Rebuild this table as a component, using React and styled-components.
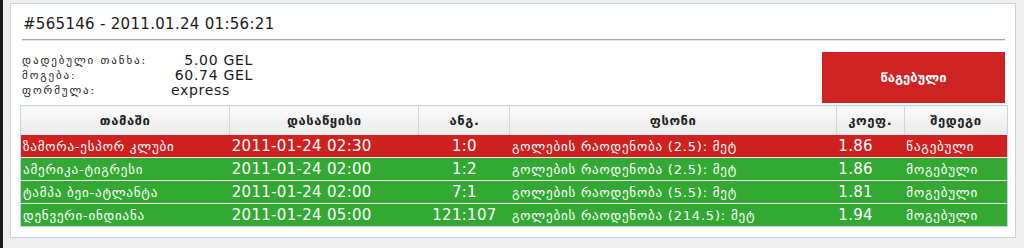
import React from 'react';
import styled, { createGlobalStyle } from 'styled-components';

const GlobalStyle = createGlobalStyle`
  html, body {
    margin: 0;
    padding: 0;
    background: #efefef;
  }
  body {
    font-family: "DejaVu Sans", Verdana, sans-serif;
  }
`;

const Page = styled.div`
  box-sizing: border-box;
  height: 248px;
  border-left: 3px solid #1c1c1c;
  padding: 3px 8px 0 7px;
`;

const Panel = styled.div`
  box-sizing: border-box;
  height: 235px;
  background: #ffffff;
  border: 1px solid #c6d3e7;
  padding: 11px 9px 0 9px;
`;

const Title = styled.div`
  margin: 0 1px 0 3px;
  font-size: 15px;
  line-height: 18px;
  letter-spacing: 0.3px;
  color: #1a1a1a;
`;

const Rule = styled.div`
  margin: 6px 1px 0 2px;
  height: 1px;
  background: #a6a6a6;
  border-bottom: 1px solid #e4e4e4;
`;

const InfoRow = styled.div`
  display: flex;
  justify-content: space-between;
  align-items: flex-start;
  margin: 11px 1px 0 2px;
`;

const InfoGrid = styled.div`
  display: grid;
  grid-template-columns: 140px 91px;
  grid-auto-rows: 15px;
  margin-top: 1px;
`;

const InfoLabel = styled.div`
  font-size: 11px;
  line-height: 15px;
  letter-spacing: 1.9px;
  color: #222;
  white-space: nowrap;
`;

const InfoValue = styled.div`
  font-size: 14px;
  line-height: 15px;
  letter-spacing: 0.7px;
  color: #1a1a1a;
  text-align: right;
  white-space: nowrap;
  padding-right: ${(p) => p.$pad || 0}px;
`;

const StatusBox = styled.div`
  width: 183px;
  height: 51px;
  background: #cf2222;
  color: #fff;
  font-weight: bold;
  font-size: 13px;
  display: flex;
  align-items: center;
  justify-content: center;
`;

const Table = styled.table`
  margin-top: 2px;
  width: 988px;
  border-collapse: collapse;
  table-layout: fixed;
  border: 1px solid #c6d3e7;
`;

const Th = styled.th`
  height: 28px;
  padding: 0;
  font-size: 13px;
  font-weight: bold;
  letter-spacing: 0.6px;
  color: #222;
  text-align: center;
  background: linear-gradient(#fbfbfb, #ebebeb);
  border-right: 1px solid #d6d6d6;
  &:last-child {
    border-right: none;
  }
`;

const Tr = styled.tr`
  background: ${(p) => (p.$lost ? '#d02121' : '#33a933')};
  border-top: 1px solid #e6e6e6;
`;

const Td = styled.td`
  height: 22px;
  padding: 0 0 0 ${(p) => (p.$center ? 0 : 2)}px;
  color: #fff;
  font-size: ${(p) => (p.$ka ? 13 : 15)}px;
  letter-spacing: ${(p) => (p.$ka ? 0.8 : 0.3)}px;
  text-align: ${(p) => (p.$center ? 'center' : 'left')};
  white-space: nowrap;
  overflow: hidden;
`;

const columns = [
  { title: 'თამაში', width: 209 },
  { title: 'დასაწყისი', width: 189 },
  { title: 'ანგ.', width: 91 },
  { title: 'ფსონი', width: 326 },
  { title: 'კოეფ.', width: 68 },
  { title: 'შედეგი', width: 103 },
];

const bets = [
  { game: 'ზამორა-ესპორ კლუბი', start: '2011-01-24 02:30', score: '1:0', bet: 'გოლების რაოდენობა (2.5): მეტ', odds: '1.86', result: 'წაგებული', lost: true },
  { game: 'ამერიკა-ტიგრესი', start: '2011-01-24 02:00', score: '1:2', bet: 'გოლების რაოდენობა (2.5): მეტ', odds: '1.86', result: 'მოგებული' },
  { game: 'ტამპა ბეი-ატლანტა', start: '2011-01-24 02:00', score: '7:1', bet: 'გოლების რაოდენობა (5.5): მეტ', odds: '1.81', result: 'მოგებული' },
  { game: 'დენვერი-ინდიანა', start: '2011-01-24 05:00', score: '121:107', bet: 'გოლების რაოდენობა (214.5): მეტ', odds: '1.94', result: 'მოგებული' },
];

const App = () => {
  return (
    <>
      <GlobalStyle />
      <Page>
        <Panel>
          <Title>#565146 - 2011.01.24 01:56:21</Title>
          <Rule />
          <InfoRow>
            <InfoGrid>
              <InfoLabel>დადებული თანხა:</InfoLabel>
              <InfoValue>5.00 GEL</InfoValue>
              <InfoLabel>მოგება:</InfoLabel>
              <InfoValue>60.74 GEL</InfoValue>
              <InfoLabel>ფორმულა:</InfoLabel>
              <InfoValue $pad={23}>express</InfoValue>
            </InfoGrid>
            <StatusBox>წაგებული</StatusBox>
          </InfoRow>
          <Table>
            <colgroup>
              {columns.map((c) => (
                <col key={c.title} style={{ width: c.width }} />
              ))}
            </colgroup>
            <thead>
              <tr>
                {columns.map((c) => (
                  <Th key={c.title}>{c.title}</Th>
                ))}
              </tr>
            </thead>
            <tbody>
              {bets.map((b) => (
                <Tr key={b.game} $lost={b.lost}>
                  <Td $ka>{b.game}</Td>
                  <Td>{b.start}</Td>
                  <Td $center>{b.score}</Td>
                  <Td $ka>{b.bet}</Td>
                  <Td>{b.odds}</Td>
                  <Td $ka>{b.result}</Td>
                </Tr>
              ))}
            </tbody>
          </Table>
        </Panel>
      </Page>
    </>
  );
};

export default App;
